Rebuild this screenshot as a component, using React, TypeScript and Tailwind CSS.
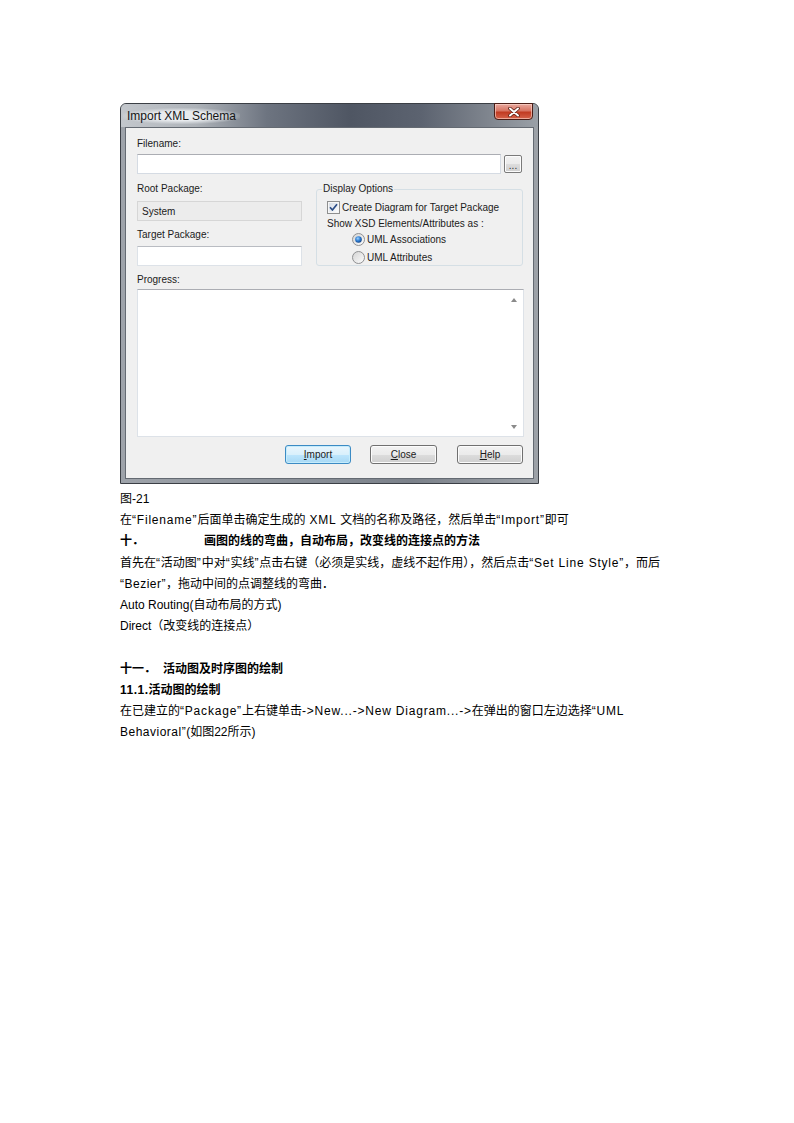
import React from "react";

function CheckBox() {
  return (
    <svg width="13" height="13" viewBox="0 0 13 13">
      <defs>
        <linearGradient id="cbg" x1="0" y1="0" x2="1" y2="1">
          <stop offset="0" stopColor="#d6dde6" />
          <stop offset="1" stopColor="#fbfcfd" />
        </linearGradient>
      </defs>
      <rect x="0.5" y="0.5" width="12" height="12" fill="#f6f6f6" stroke="#8e8f8f" />
      <rect x="2" y="2" width="9" height="9" fill="url(#cbg)" />
      <path d="M3 6.3 L5.4 9 L10 3.2" stroke="#2c4d86" strokeWidth="1.7" fill="none" strokeLinejoin="round" />
    </svg>
  );
}

function Radio({ on }: { on: boolean }) {
  return (
    <svg width="13" height="13" viewBox="0 0 13 13">
      <defs>
        <linearGradient id="rbg" x1="0" y1="0" x2="1" y2="1">
          <stop offset="0" stopColor="#d3d3d3" />
          <stop offset="1" stopColor="#fdfdfd" />
        </linearGradient>
        <radialGradient id="rdot" cx="0.4" cy="0.35" r="0.7">
          <stop offset="0" stopColor="#9fd3ff" />
          <stop offset="0.5" stopColor="#2f7fd4" />
          <stop offset="1" stopColor="#123f80" />
        </radialGradient>
      </defs>
      <circle cx="6.5" cy="6.5" r="6" fill="url(#rbg)" stroke="#8f9092" />
      {on && <circle cx="6.5" cy="6.5" r="3.3" fill="url(#rdot)" />}
    </svg>
  );
}

function Btn({ children, def, w }: { children: React.ReactNode; def?: boolean; w: string }) {
  return (
    <div
      className={
        "h-[19px] rounded-[3px] border flex items-center justify-center text-[10px] text-[#1b1b1b] " +
        w +
        " " +
        (def
          ? "border-[#3c8bc4] bg-[linear-gradient(180deg,#eaf6fd_0%,#d9f0fc_50%,#bee6fd_50%,#a7d9f5_100%)] shadow-[inset_0_0_0_1px_#c5ecfc]"
          : "border-[#707070] bg-[linear-gradient(180deg,#f2f2f2_0%,#ebebeb_50%,#dddddd_50%,#cfcfcf_100%)] shadow-[inset_0_0_0_1px_#fcfcfc]")
      }
    >
      {children}
    </div>
  );
}

function Dialog() {
  return (
    <div className="w-[419px] h-[381px] flex flex-col rounded-t-[6px] border border-[#3b3f45] bg-[linear-gradient(90deg,#9ea3aa_0%,#8a9098_40%,#7b818a_70%,#9da2a8_100%)] font-['Liberation_Sans',sans-serif]">
      <div className="relative h-[23px] rounded-t-[5px] bg-[linear-gradient(90deg,#c3c7cc_0%,#aeb3b9_18%,#6d7480_35%,#4f5663_55%,#5c6370_72%,#7f858e_88%,#9aa0a7_100%)] flex items-center">
        <span className="ml-[2px] px-[4px] text-[12px] leading-[16px] text-[#151515] bg-[radial-gradient(ellipse_at_center,rgba(235,238,241,0.95)_40%,rgba(235,238,241,0)_75%)]">
          Import XML Schema
        </span>
        <div className="absolute right-[5px] -top-px w-[39px] h-[17px] rounded-b-[4px] border border-[#4b1d16] bg-[linear-gradient(180deg,#e9a99f_0%,#d77462_45%,#c13b22_55%,#d5624a_100%)] shadow-[inset_0_0_0_1px_rgba(255,220,210,0.6)] flex items-center justify-center">
          <svg width="12" height="10" viewBox="0 0 12 10">
            <path d="M2 1.5 L10 8.5 M10 1.5 L2 8.5" stroke="#5a1e14" strokeWidth="3.6" strokeLinecap="round" />
            <path d="M2 1.5 L10 8.5 M10 1.5 L2 8.5" stroke="#ffffff" strokeWidth="2" strokeLinecap="round" />
          </svg>
        </div>
      </div>
      <div className="flex-1 mx-[4px] mb-[4px] border border-[#646a72] bg-[#f0f0f0] pl-[11px] pr-[9px] pt-[9px] text-[10px] text-[#1b1b1b]">
        <div className="h-[13px] leading-[13px]">Filename:</div>
        <div className="mt-[4px] flex items-end">
          <div className="w-[364px] h-[20px] bg-white border border-[#d5dbe3] border-t-[#abadb3]" />
          <div className="ml-[3px] mb-px w-[18px] h-[18px] rounded-[2px] border border-[#7a7a7a] bg-[linear-gradient(180deg,#f2f2f2_0%,#ebebeb_50%,#dddddd_50%,#cfcfcf_100%)] shadow-[inset_0_0_0_1px_#fcfcfc] flex items-end justify-center text-[10px] leading-[12px] text-[#333]">
            ...
          </div>
        </div>
        <div className="flex">
          <div className="w-[165px]">
            <div className="mt-[8px] h-[13px] leading-[13px]">Root Package:</div>
            <div className="mt-[6px] h-[20px] bg-[#ececec] border border-[#d6d6d6] flex items-center pl-[4px]">System</div>
            <div className="mt-[7px] h-[13px] leading-[13px]">Target Package:</div>
            <div className="mt-[5px] h-[20px] bg-white border border-[#dde2e8] border-t-[#b9bcc2]" />
          </div>
          <div className="relative ml-[14px] mt-[15px] w-[207px] h-[77px] rounded-[3px] border border-[#d5dfe5] pl-[10px] pt-[11px]">
            <div className="absolute left-[5px] -top-[8px] h-[13px] leading-[13px] px-[1px] bg-[#f0f0f0]">Display Options</div>
            <div className="flex items-center gap-[2px] h-[13px] leading-[13px]">
              <CheckBox />
              <span>Create Diagram for Target Package</span>
            </div>
            <div className="mt-[3px] h-[13px] leading-[13px]">Show XSD Elements/Attributes as :</div>
            <div className="mt-[3px] ml-[25px] flex items-center gap-[2px] h-[13px] leading-[13px]">
              <Radio on />
              <span>UML Associations</span>
            </div>
            <div className="mt-[5px] ml-[25px] flex items-center gap-[2px] h-[13px] leading-[13px]">
              <Radio on={false} />
              <span>UML Attributes</span>
            </div>
          </div>
        </div>
        <div className="mt-[7px] h-[13px] leading-[13px]">Progress:</div>
        <div className="relative mt-[3px] h-[148px] bg-white border border-[#dde2e8] border-t-[#abadb3]">
          <svg className="absolute right-[6px] top-[8px]" width="6" height="4" viewBox="0 0 6 4">
            <path d="M0 4 L3 0 L6 4 Z" fill="#8a8a8a" />
          </svg>
          <svg className="absolute right-[6px] bottom-[7px]" width="6" height="4" viewBox="0 0 6 4">
            <path d="M0 0 L3 4 L6 0 Z" fill="#8a8a8a" />
          </svg>
        </div>
        <div className="mt-[8px] flex justify-end pr-[1px]">
          <Btn def w="w-[66px]">
            <span className="underline">I</span>mport
          </Btn>
          <div className="w-[19px]" />
          <Btn w="w-[67px]">
            <span className="underline">C</span>lose
          </Btn>
          <div className="w-[20px]" />
          <Btn w="w-[66px]">
            <span className="underline">H</span>elp
          </Btn>
        </div>
      </div>
    </div>
  );
}

function W({ children }: { children: React.ReactNode }) {
  return <span className="tracking-[0.8px]">{children}</span>;
}

function W2({ children }: { children: React.ReactNode }) {
  return <span className="tracking-[0.5px]">{children}</span>;
}

export default function App() {
  return (
    <div className="w-[794px] min-h-[1123px] bg-white pl-[120px] pt-[103px]">
      <Dialog />
      <div className="mt-[5px] text-[12px] leading-[21.2px] text-black font-['Liberation_Sans','Noto_Sans_CJK_SC',sans-serif] whitespace-nowrap">
        <div>图-21</div>
        <div>
          在<W>“Filename”</W>后面单击确定生成的<W> XML </W>文档的名称及路径，然后单击<W>“Import”</W>即可
        </div>
        <div className="font-bold">
          <span className="inline-block w-[84px]">十．</span>画图的线的弯曲，自动布局，改变线的连接点的方法
        </div>
        <div>
          首先在<W>“</W>活动图<W>”</W>中对<W>“</W>实线<W>”</W>点击右键（必须是实线，虚线不起作用），然后点击<W>“Set Line Style”</W>，而后
        </div>
        <div>
          <W2>“Bezier”</W2>，拖动中间的点调整线的弯曲．
        </div>
        <div>Auto Routing(自动布局的方式)</div>
        <div>Direct（改变线的连接点）</div>
        <div className="h-[21.2px]" />
        <div className="font-bold">
          <span className="inline-block w-[43px]">十一．</span>活动图及时序图的绘制
        </div>
        <div className="font-bold">
          <W2>11.1.</W2>活动图的绘制
        </div>
        <div>
          在已建立的<W>“Package”</W>上右键单击<W>-&gt;New...-&gt;New Diagram...-&gt;</W>在弹出的窗口左边选择<W>“UML</W>
        </div>
        <div>
          <W2>Behavioral”</W2>(如图22所示)
        </div>
      </div>
    </div>
  );
}
